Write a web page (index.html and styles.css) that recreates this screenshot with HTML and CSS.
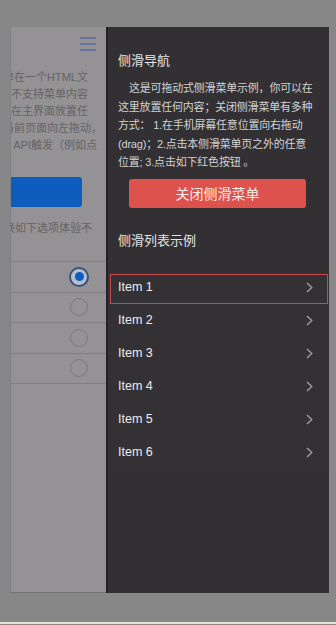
FILE: index.html
```html
<!DOCTYPE html>
<html lang="zh-CN">
<head>
<meta charset="utf-8">
<title>侧滑导航</title>
<link rel="stylesheet" href="styles.css">
</head>
<body>
<div class="screen">
  <div class="frame">
    <div class="page">
      <div class="page-inner">
        <header class="page-header">
          <svg class="menu-icon" width="16" height="14" viewBox="0 0 16 14"><path d="M0 1H16M0 7H16M0 13H16" stroke="#586a9c" stroke-width="1.5" fill="none"/></svg>
        </header>
        <div class="page-text">
          <div class="ln">本页面的侧滑菜单在一个HTML文</div>
          <div class="ln">件中，本示例是不支持菜单内容</div>
          <div class="ln">滚动的方式，在主界面放置任</div>
          <div class="ln ln-comma">意按钮，在当前页面向左拖动，</div>
          <div class="ln ln-long">或通过JS API触发（例如点</div>
        </div>
        <div class="btn-blue"></div>
        <div class="page-hint">您可以切换如下选项体验不</div>
        <ul class="radio-list">
          <li><span class="opt">主界面移动</span><span class="radio on"></span></li>
          <li><span class="opt">主界面不动</span><span class="radio"></span></li>
          <li><span class="opt">缩放式</span><span class="radio"></span></li>
          <li><span class="opt">菜单移动</span><span class="radio"></span></li>
        </ul>
      </div>
    </div>
    <aside class="drawer">
      <div class="drawer-body">
        <h2 class="drawer-title">侧滑导航</h2>
        <p class="drawer-text">这是可拖动式侧滑菜单示例，你可以在<br>这里放置任何内容；关闭侧滑菜单有多种<br>方式： 1.在手机屏幕任意位置向右拖动<br>(drag)；2.点击本侧滑菜单页之外的任意<br>位置; 3.点击如下红色按钮 。</p>
        <button class="btn-close">关闭侧滑菜单</button>
        <h2 class="drawer-title sub">侧滑列表示例</h2>
      </div>
      <ul class="drawer-list">
        <li class="item active">Item 1<svg class="chev" width="7" height="11" viewBox="0 0 7 11"><path d="M1 1L5.8 5.5L1 10" stroke="#9c9c9c" stroke-width="1.4" fill="none"/></svg></li>
        <li class="item">Item 2<svg class="chev" width="7" height="11" viewBox="0 0 7 11"><path d="M1 1L5.8 5.5L1 10" stroke="#9c9c9c" stroke-width="1.4" fill="none"/></svg></li>
        <li class="item">Item 3<svg class="chev" width="7" height="11" viewBox="0 0 7 11"><path d="M1 1L5.8 5.5L1 10" stroke="#9c9c9c" stroke-width="1.4" fill="none"/></svg></li>
        <li class="item">Item 4<svg class="chev" width="7" height="11" viewBox="0 0 7 11"><path d="M1 1L5.8 5.5L1 10" stroke="#9c9c9c" stroke-width="1.4" fill="none"/></svg></li>
        <li class="item">Item 5<svg class="chev" width="7" height="11" viewBox="0 0 7 11"><path d="M1 1L5.8 5.5L1 10" stroke="#9c9c9c" stroke-width="1.4" fill="none"/></svg></li>
        <li class="item">Item 6<svg class="chev" width="7" height="11" viewBox="0 0 7 11"><path d="M1 1L5.8 5.5L1 10" stroke="#9c9c9c" stroke-width="1.4" fill="none"/></svg></li>
      </ul>
    </aside>
  </div>
  <div class="bottom-line"></div>
</div>
</body>
</html>
```
FILE: styles.css
```css
* { box-sizing: border-box; }
html, body { margin: 0; padding: 0; }
body {
  background: #878787;
  font-family: "Liberation Sans", "Noto Sans CJK SC", sans-serif;
  width: 336px;
  height: 625px;
  overflow: hidden;
}
.screen {
  display: flex;
  flex-direction: column;
  height: 625px;
}
.frame {
  margin: 27px 0 0 10px;
  width: 319px;
  height: 566px;
  display: flex;
}
/* main page, pushed left by the open drawer */
.page {
  width: 96px;
  height: 100%;
  overflow: hidden;
  background: #949294;
  border-left: 1px solid #7f7e80;
  border-bottom: 1px solid #727173;
}
.page-inner {
  width: 319px;
  margin-left: -224px;
}
.page-header {
  height: 42px;
  display: flex;
  justify-content: flex-end;
  align-items: flex-start;
  padding: 10px 10px 0 0;
}
.menu-icon { display: block; }
.page-text {
  font-size: 11px;
  line-height: 17px;
  color: #646365;
}
.ln {
  white-space: nowrap;
  text-align: right;
  padding-right: 18px;
}
.ln-comma { padding-right: 4px; }
.ln-long { padding-right: 9px; }
.btn-blue {
  margin: 23px 24px 0 15px;
  height: 30px;
  background: #0d5cbe;
  border-radius: 3px;
}
.page-hint {
  margin-top: 12.5px;
  font-size: 11px;
  line-height: 17px;
  color: #646365;
  text-align: right;
  padding-right: 14px;
  white-space: nowrap;
}
.radio-list {
  list-style: none;
  margin: 24.5px 0 0;
  padding: 0;
  border-top: 1px solid #7f7e80;
}
.radio-list li {
  height: 30.5px;
  border-bottom: 1px solid #7f7e80;
  display: flex;
  align-items: center;
  justify-content: space-between;
  padding: 0 18px 0 15px;
  font-size: 11px;
  color: #646365;
}
.radio {
  width: 18px;
  height: 18px;
  border-radius: 50%;
  border: 1px solid #7a797b;
  display: flex;
  align-items: center;
  justify-content: center;
}
.radio.on {
  width: 20px;
  height: 20px;
  margin-right: -1px;
  border: 2px solid #3b5176;
  background: #b3bfd0;
}
.radio.on::after {
  content: "";
  width: 9px;
  height: 9px;
  border-radius: 50%;
  background: #0e5cc0;
}
/* drawer */
.drawer {
  width: 223px;
  height: 100%;
  background: #333034;
  border-left: 2px solid #242226;
  display: flex;
  flex-direction: column;
}
.drawer-body {
  padding: 24px 10px 0 10px;
}
.drawer-title {
  margin: 0;
  font-size: 13px;
  font-weight: normal;
  line-height: 20px;
  color: #e4e4e4;
}
.drawer-title.sub { margin-top: 23px; }
.drawer-text {
  margin: 8px 0 0;
  font-size: 11px;
  line-height: 18.5px;
  letter-spacing: -0.2px;
  color: #d2d2d2;
  text-indent: 11px;
  white-space: nowrap;
}
.btn-close {
  display: block;
  margin: 7px 13px 0 11px;
  width: 177px;
  height: 29px;
  border: none;
  border-radius: 3px;
  background: #dd524d;
  color: #fbeaea;
  font-family: "Liberation Sans", "Noto Sans CJK SC", sans-serif;
  font-size: 14px;
  padding: 0;
}
.drawer-list {
  list-style: none;
  margin: 20px 0 0;
  padding: 0;
}
.item {
  position: relative;
  height: 33px;
  display: flex;
  align-items: center;
  justify-content: space-between;
  padding: 0 16px 0 10px;
  font-size: 12.5px;
  color: #ececec;
  background: #343135;
}
.item.active::after {
  content: "";
  position: absolute;
  top: 3px;
  bottom: 0;
  left: 2px;
  right: 1px;
  border: 1px solid #c9484b;
}
.chev { display: block; }
.bottom-line {
  margin-top: 29px;
  height: 2px;
  background: #e3e1d9;
}
```
